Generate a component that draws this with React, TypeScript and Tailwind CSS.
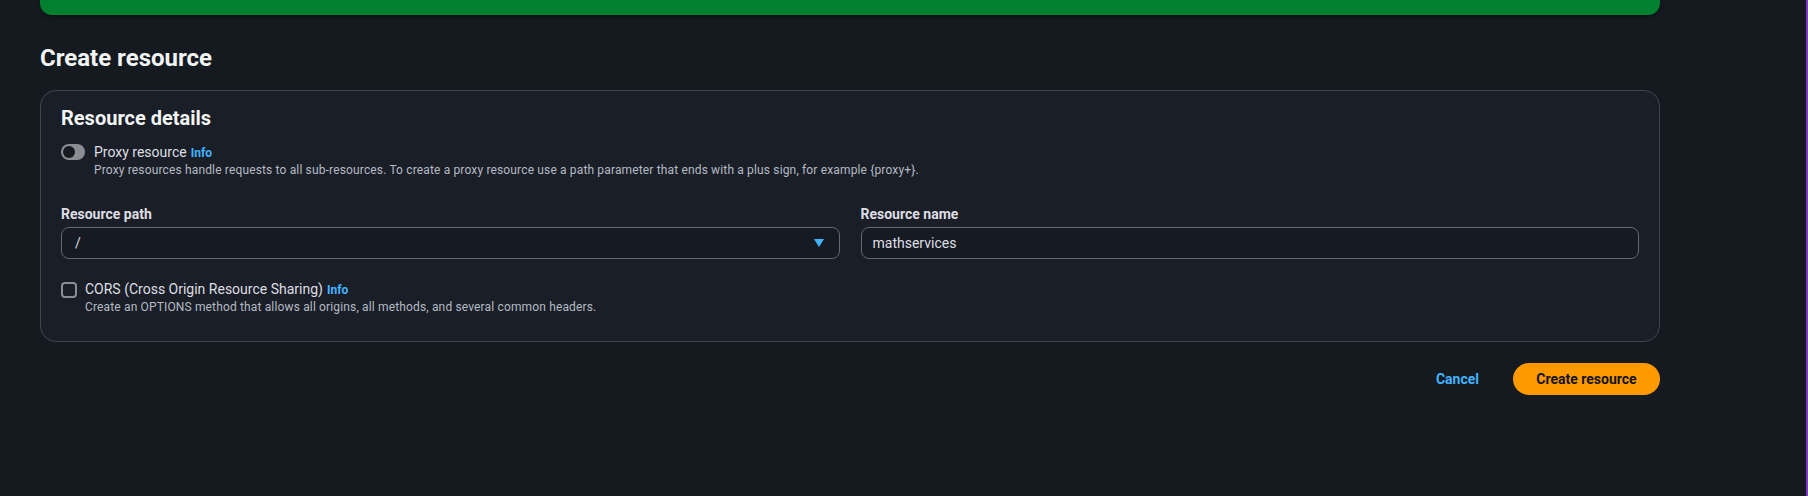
import React from 'react'

const font = { fontFamily: 'Roboto, "Open Sans", sans-serif' }

const Info = () => (
    <span className="ml-[4px] text-[12px] font-bold text-[#42b4ff]">Info</span>
)

export default function App() {
    return (
        <div className="flex h-[496px] w-full bg-[#151a21] text-[#e9ebed] font-['Roboto',sans-serif]" style={font}>
            <div className="flex-1 pl-[40px]">
                <div className="w-[1620px]">
                    <div className="h-[15px] rounded-b-[12px] bg-[#01802f] shadow-[0_2px_4px_rgba(0,0,0,0.35)]"></div>

                    <h1 className="mt-[27px] text-[24px] leading-[32px] font-bold text-[#f2f3f3]">Create resource</h1>

                    <div className="mt-[16px] rounded-[16px] border border-[#414550] bg-[#1a1e27] px-[20px] pt-[13px] pb-[26px]">
                        <h2 className="text-[20px] leading-[28px] font-bold text-[#f2f3f3]">Resource details</h2>

                        <div className="mt-[11px] flex gap-[9px]">
                            <div className="mt-[1px] flex h-[16px] w-[24px] items-center rounded-full bg-[#8c8c94] px-[2px]">
                                <div className="h-[12px] w-[12px] rounded-full bg-[#151a21]"></div>
                            </div>
                            <div>
                                <div className="text-[14px] leading-[18px] text-[#dedee3]">
                                    Proxy resource<Info />
                                </div>
                                <div className="text-[12px] leading-[16px] tracking-[0.15px] text-[#b4bbc4]">
                                    Proxy resources handle requests to all sub-resources. To create a proxy resource use a path parameter that ends with a plus sign, for example {'{proxy+}'}.
                                </div>
                            </div>
                        </div>

                        <div className="mt-[27px] grid grid-cols-2 gap-[21px]">
                            <div>
                                <label className="block text-[14px] leading-[18px] font-bold text-[#dedee3]">Resource path</label>
                                <div className="mt-[4px] flex h-[32px] items-center justify-between rounded-[8px] border border-[#656871] bg-[#161a22] pl-[13px] pr-[15px]">
                                    <span className="text-[14px] text-[#dedee3]">/</span>
                                    <svg width="10" height="8" viewBox="0 0 10 8">
                                        <path d="M0 0 H10 L5 8 Z" fill="#42b4ff" />
                                    </svg>
                                </div>
                            </div>
                            <div>
                                <label className="block text-[14px] leading-[18px] font-bold text-[#dedee3]">Resource name</label>
                                <div className="mt-[4px] flex h-[32px] items-center rounded-[8px] border border-[#656871] bg-[#161a22] px-[11px]">
                                    <span className="text-[14px] text-[#dedee3]">mathservices</span>
                                </div>
                            </div>
                        </div>

                        <div className="mt-[21px] flex gap-[8px]">
                            <div className="mt-[2px] h-[16px] w-[16px] rounded-[4px] border-2 border-[#8c8c94]"></div>
                            <div>
                                <div className="text-[14px] leading-[18px] text-[#dedee3]">
                                    CORS (Cross Origin Resource Sharing)<Info />
                                </div>
                                <div className="text-[12px] leading-[16px] tracking-[0.15px] text-[#b4bbc4]">
                                    Create an OPTIONS method that allows all origins, all methods, and several common headers.
                                </div>
                            </div>
                        </div>
                    </div>

                    <div className="mt-[21px] flex items-center justify-end gap-[34px]">
                        <button className="text-[14px] font-bold text-[#42b4ff]">Cancel</button>
                        <button className="h-[32px] w-[147px] rounded-full bg-[#ff9900] text-[14px] font-bold text-[#0f141a]">Create resource</button>
                    </div>
                </div>
            </div>
            <div className="w-[2px] bg-[#7b3fc0]"></div>
        </div>
    )
}
